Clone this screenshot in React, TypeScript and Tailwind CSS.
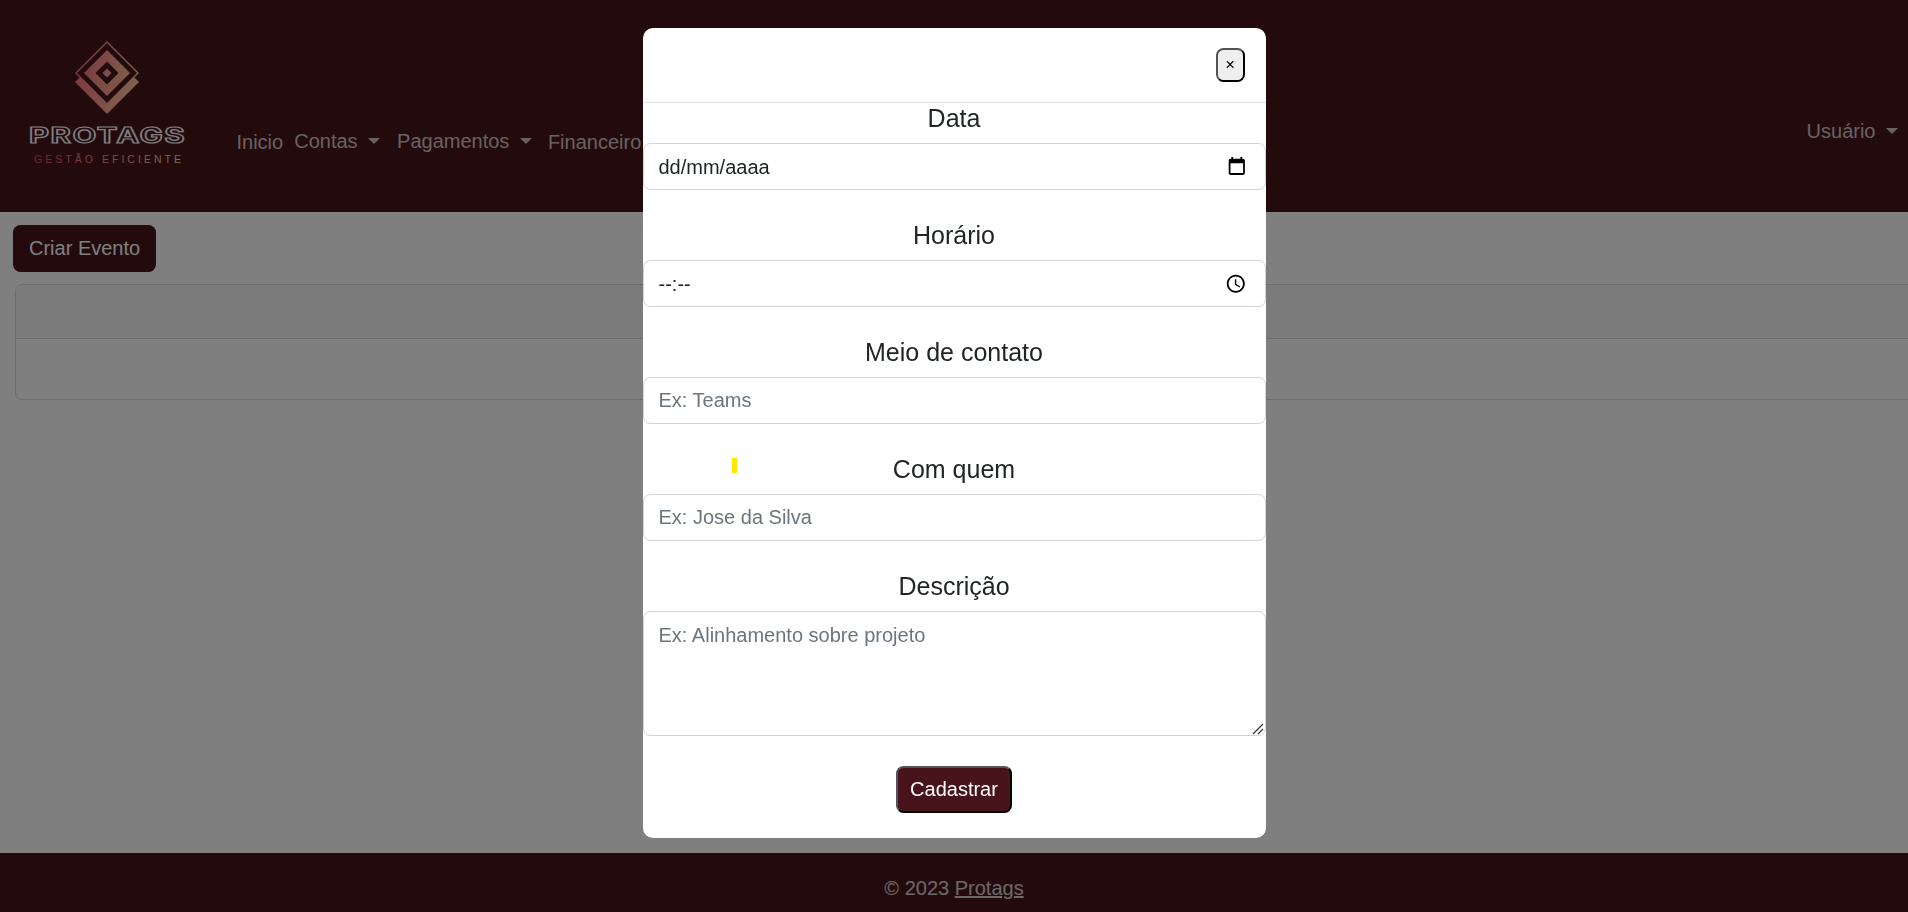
const navItems = [
  { label: "Inicio", caret: false, className: "ml-[36.5px] translate-y-px" },
  { label: "Contas", caret: true, className: "ml-[11px]" },
  { label: "Pagamentos", caret: true, className: "ml-[17px]" },
  { label: "Financeiro", caret: false, className: "ml-[16px] translate-y-px" },
];

const Caret = () => (
  <span className="ml-[10.5px] inline-block border-x-[6px] border-t-[6px] border-x-transparent border-t-current align-[4px]" />
);

const Diamond = ({ cy, r, fill }: { cy: number; r: number; fill: string }) => (
  <polygon
    points={`107,${cy - r} ${107 + r},${cy} 107,${cy + r} ${107 - r},${cy}`}
    fill={fill}
  />
);

const Logo = () => (
  <svg viewBox="0 0 200 212" className="h-[212px] w-[200px] shrink-0">
    <defs>
      <linearGradient id="mark" gradientUnits="userSpaceOnUse" x1="75" y1="70" x2="140" y2="90">
        <stop offset="0" stopColor="#f8707c" />
        <stop offset="1" stopColor="#ffcca0" />
      </linearGradient>
      <linearGradient id="tagline" gradientUnits="userSpaceOnUse" x1="34" y1="0" x2="181" y2="0">
        <stop offset="0" stopColor="#f03c58" />
        <stop offset="1" stopColor="#ffd4aa" />
      </linearGradient>
    </defs>
    <Diamond cy={82} r={32} fill="url(#mark)" />
    <Diamond cy={73} r={32} fill="url(#mark)" />
    <Diamond cy={73} r={30} fill="#46141a" />
    <Diamond cy={73} r={23} fill="url(#mark)" />
    <Diamond cy={73} r={11.5} fill="#46141a" />
    <Diamond cy={73} r={4.5} fill="url(#mark)" />
    <text
      x="29"
      y="143"
      textLength="157"
      lengthAdjust="spacingAndGlyphs"
      fontFamily="Inter, sans-serif"
      fontWeight="700"
      fontSize="21"
      letterSpacing="1"
      fill="#46141a"
      stroke="#ffffff"
      strokeWidth="1.2"
    >
      PROTAGS
    </text>
    <text
      x="34"
      y="163"
      textLength="147"
      lengthAdjust="spacing"
      fontFamily="'Liberation Sans', sans-serif"
      fontSize="10.5"
      fill="url(#tagline)"
    >
      GESTÃO EFICIENTE
    </text>
  </svg>
);

const Label = ({ children }: { children: React.ReactNode }) => (
  <label className="mb-[10px] block text-center text-[25px] leading-[30px] text-[#212529]">
    {children}
  </label>
);

const inputClass =
  "mb-[30px] block h-[47px] w-full rounded-[7.5px] border border-[#ced4da] bg-white px-[15px] text-[20px] leading-[30px] text-[#212529] outline-none placeholder:text-[#6c757d]";

const App = () => {
  return (
    <div className="flex h-screen flex-col overflow-hidden bg-white font-['Liberation_Sans',Arial,sans-serif] text-[20px] leading-[30px]">
      <header className="flex h-[212px] shrink-0 items-center bg-[#46141a] text-white/75">
        <Logo />
        <nav className="mt-[70px] flex items-center">
          {navItems.map((item) => (
            <a key={item.label} className={`whitespace-nowrap ${item.className}`}>
              {item.label}
              {item.caret && <Caret />}
            </a>
          ))}
        </nav>
        <a className="ml-auto mr-[10px] mt-[50px] whitespace-nowrap">
          Usuário
          <Caret />
        </a>
      </header>

      <main className="flex-1 pl-[13px] pt-[13px]">
        <button className="block h-[47px] rounded-[7.5px] bg-[#46141a] px-[16px] pb-[2px] text-white">
          Criar Evento
        </button>
        <div className="ml-[1.5px] mt-[12px] h-[116px] w-[2000px] overflow-hidden rounded-[7.5px] border border-[#d6d8da]">
          <div className="h-[54px] border-b border-[#d6d8da] bg-[#f6f6f6]" />
          <div className="h-[60px]" />
        </div>
      </main>

      <footer className="flex h-[59px] shrink-0 items-center justify-center bg-[#46141a] pt-[11px] text-white/80">
        <span>
          © 2023 <a className="underline">Protags</a>
        </span>
      </footer>

      {/* modal */}
      <div className="fixed inset-0 bg-black/50" />
      <div className="fixed inset-0 flex justify-center pt-[28px]">
        <div className="relative h-[810px] w-[623px] rounded-[10px] bg-white">
          <div className="flex h-[75px] justify-end border-b border-[#dee2e6] pr-[21px] pt-[20px]">
            <button className="h-[34px] w-[29px] rounded-[7.5px] border-2 border-black bg-[#efefef] text-[16.67px] leading-none text-black [border-style:outset]">
              ×
            </button>
          </div>
          <form className="block">
            <Label>Data</Label>
            <div className={`flex items-center justify-between pr-[17px] ${inputClass}`}>
              <span>dd/mm/aaaa</span>
              <svg viewBox="0 0 24 24" className="h-[21.6px] w-[21.6px]">
                <path d="M19 3h-1V1h-2v2H8V1H6v2H5c-1.11 0-1.99.9-1.99 2L3 19c0 1.1.89 2 2 2h14c1.1 0 2-.9 2-2V5c0-1.1-.9-2-2-2zm0 16H5V8h14v11z" />
              </svg>
            </div>

            <Label>Horário</Label>
            <div className={`flex items-center justify-between pr-[18px] ${inputClass}`}>
              <span>--:--</span>
              <svg viewBox="0 0 24 24" className="h-[21.6px] w-[21.6px]">
                <path d="M11.99 2C6.47 2 2 6.48 2 12s4.47 10 9.99 10C17.52 22 22 17.52 22 12S17.52 2 11.99 2zM12 20c-4.42 0-8-3.58-8-8s3.58-8 8-8 8 3.58 8 8-3.58 8-8 8zm.5-13H11v6l5.25 3.15.75-1.23-4.5-2.67z" />
              </svg>
            </div>

            <Label>Meio de contato</Label>
            <input className={inputClass} placeholder="Ex: Teams" />

            <Label>Com quem</Label>
            <input className={inputClass} placeholder="Ex: Jose da Silva" />

            <Label>Descrição</Label>
            <div className="relative mb-[30px]">
              <textarea
                className="block h-[125px] w-full resize-none rounded-[7.5px] border border-[#ced4da] bg-white px-[15px] py-[7.5px] text-[20px] leading-[30px] text-[#212529] outline-none placeholder:text-[#6c757d]"
                placeholder="Ex: Alinhamento sobre projeto"
              />
              <svg viewBox="0 0 12 12" className="absolute bottom-px right-[2px] h-[12px] w-[12px]">
                <path d="M1 11 L11 1 M6 11 L11 6" stroke="#333" strokeWidth="1.2" fill="none" />
              </svg>
            </div>

            <div className="flex justify-center">
              <button className="h-[47px] w-[116px] rounded-[7.5px] border-2 border-black bg-[#46141a] pb-[2px] text-white [border-style:outset]">
                Cadastrar
              </button>
            </div>
          </form>
          <span className="absolute left-[89.5px] top-[430px] h-[15px] w-[5px] bg-[#ffe600]" />
        </div>
      </div>
    </div>
  );
};

export default App;
